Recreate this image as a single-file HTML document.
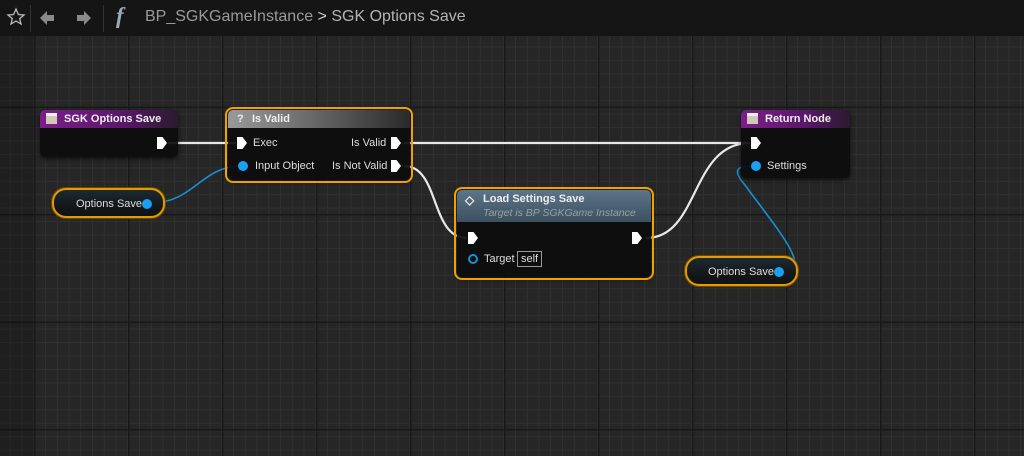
<!DOCTYPE html>
<html><head><meta charset="utf-8"><style>
*{margin:0;padding:0;box-sizing:border-box}
body{width:1024px;height:456px;overflow:hidden;background:#262626;font-family:"Liberation Sans",sans-serif;position:relative}
.grid{position:absolute;left:0;top:36px;width:1024px;height:420px;
background:
linear-gradient(90deg,#191919 0 1.5px,transparent 1.5px) -60px 0/94px 100%,
linear-gradient(180deg,#191919 0 1.5px,transparent 1.5px) 0 -37px/100% 107.5px,
linear-gradient(90deg,#303030 0 1px,transparent 1px) -2px 0/11.75px 100%,
linear-gradient(180deg,#303030 0 1px,transparent 1px) 0 -3px/100% 13.45px,#262626}
.leftshade{position:absolute;left:0;top:36px;width:34px;height:420px;background:rgba(0,0,0,.18)}
.top{position:absolute;left:0;top:0;width:1024px;height:36px;background:#151515;color:#b8b8b8}
.node{position:absolute;background:rgba(12,12,12,.92);border-radius:5px;box-shadow:0 2px 4px rgba(0,0,0,.6);color:#ddd;font-size:11px}
.sel{outline:2px solid #f0a000;outline-offset:1px;border-radius:5px}
.hdr{height:18px;border-radius:5px 5px 0 0;font-weight:bold;font-size:11px;color:#eee;padding:3px 0 0 24px;position:relative}
.t{position:absolute;white-space:nowrap}
.exec{position:absolute;width:10px;height:12px;background:#fff;clip-path:polygon(0 0,55% 0,100% 50%,55% 100%,0 100%)}
.dot{position:absolute;width:10px;height:10px;border-radius:50%;background:#1aa0f0}
.pill{position:absolute;border-radius:14px;background:linear-gradient(#1b2a33,#15191c 55%,#101214);border:2px solid #e59a00;box-shadow:0 0 0 1px #6b4a00;color:#ddd;font-size:11px}
.icon{position:absolute;left:6px;top:3px;width:11px;height:11px;background:#cfc8b8;border-top:3px solid #eee}
</style></head><body>
<div class="grid"></div><div class="leftshade"></div>
<div class="top">
<svg width="30" height="36" style="position:absolute;left:4px;top:0"><polygon points="12,9 14.4,14.5 20,15 15.7,18.6 17,24 12,21 7,24 8.3,18.6 4,15 9.6,14.5" fill="none" stroke="#bbb" stroke-width="1.3"/></svg>
<div style="position:absolute;left:30px;top:5px;width:1px;height:27px;background:#333"></div>
<svg width="20" height="20" style="position:absolute;left:38px;top:8px"><polygon points="2,10 9,3 9,7 16,7 16,13 9,13 9,17" fill="#8a8a8a"/></svg>
<svg width="20" height="20" style="position:absolute;left:73px;top:8px"><polygon points="18,10 11,3 11,7 4,7 4,13 11,13 11,17" fill="#8a8a8a"/></svg>
<div style="position:absolute;left:103px;top:5px;width:1px;height:27px;background:#333"></div>
<div class="t" style="left:116px;top:3px;font-family:'Liberation Serif',serif;font-style:italic;font-weight:bold;font-size:23px;color:#9ab">f</div>
<div class="t" style="left:145px;top:8px;font-size:16px;color:#9a9a9a">BP_SGKGameInstance <span style="color:#ccc">&gt;</span> <span style="color:#b4b4b4">SGK Options Save</span></div>
</div>
<svg width="1024" height="456" style="position:absolute;left:0;top:0">
<g fill="none" stroke="#e8e8e8" stroke-width="2.2">
<path d="M168,143 L236,143"/>
<path d="M404,143 L750,143"/>
<path d="M404,166 C440,166 430,238 467,238"/>
<path d="M646,238 C700,238 690,143 750,143"/>
</g>
<g fill="none" stroke="#1590d0" stroke-width="1.6">
<path d="M150,203 C195,203 200,166 242,166"/>
<path d="M785,271 C815,271 770,220 745,185 C730,168 740,166 752,166"/>
</g>
</svg>
<div class="node" style="left:40px;top:110px;width:138px;height:47px">
<div class="hdr" style="background:linear-gradient(90deg,#7a1f8a,#5a1868 60%,#2a1a2e)"><div class="icon"></div>SGK Options Save</div>
<div class="exec" style="left:117px;top:27px"></div>
</div>
<div class="node sel" style="left:228px;top:110px;width:182px;height:70px">
<div class="hdr" style="background:linear-gradient(90deg,#9a9a9a,#6a6a6a 45%,#2a2a2a)"><span class="t" style="left:9px;top:3px">?</span>Is Valid</div>
<div class="exec" style="left:9px;top:27px"></div><div class="t" style="left:25px;top:27px">Exec</div>
<div class="t" style="left:123px;top:27px">Is Valid</div><div class="exec" style="left:163px;top:27px"></div>
<div class="dot" style="left:10px;top:51px"></div><div class="t" style="left:27px;top:50px">Input Object</div>
<div class="t" style="left:104px;top:50px">Is Not Valid</div><div class="exec" style="left:163px;top:50px"></div>
</div>
<div class="pill" style="left:52px;top:188px;width:113px;height:30px"><div class="t" style="left:22px;top:8px">Options Save</div><div class="dot" style="left:88px;top:9px"></div></div>
<div class="node sel" style="left:457px;top:190px;width:194px;height:87px">
<div class="hdr" style="height:32px;background:linear-gradient(#5d7588,#3b5060);padding-left:26px"><span class="t" style="left:8px;top:3px;font-size:12px">◇</span>Load Settings Save<div class="t" style="left:26px;top:17px;font-weight:normal;font-style:italic;color:#97a0a0;font-size:10.5px">Target is BP SGKGame Instance</div></div>
<div class="exec" style="left:11px;top:42px"></div><div class="exec" style="left:175px;top:42px"></div>
<div class="t" style="left:11px;top:64px;width:10px;height:10px;border:2px solid #1590d0;border-radius:50%"></div>
<div class="t" style="left:27px;top:63px">Target</div>
<div class="t" style="left:60px;top:61px;border:1px solid #999;padding:1px 3px;font-size:11px">self</div>
</div>
<div class="node" style="left:741px;top:110px;width:109px;height:68px">
<div class="hdr" style="background:linear-gradient(90deg,#7a1f8a,#5a1868 60%,#2a1a2e)"><div class="icon"></div>Return Node</div>
<div class="exec" style="left:10px;top:27px"></div>
<div class="dot" style="left:10px;top:51px"></div><div class="t" style="left:26px;top:50px">Settings</div>
</div>
<div class="pill" style="left:685px;top:256px;width:113px;height:30px"><div class="t" style="left:21px;top:8px">Options Save</div><div class="dot" style="left:87px;top:9px"></div></div>
</body></html>
